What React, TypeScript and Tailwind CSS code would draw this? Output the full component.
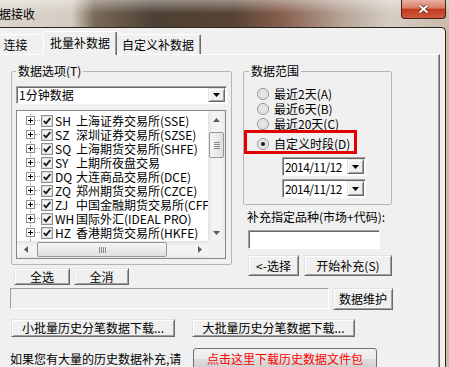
import type { ReactNode } from 'react';

const markets: [string, string][] = [
    ['SH', '上海证券交易所(SSE)'],
    ['SZ', '深圳证券交易所(SZSE)'],
    ['SQ', '上海期货交易所(SHFE)'],
    ['SY', '上期所夜盘交易'],
    ['DQ', '大连商品交易所(DCE)'],
    ['ZQ', '郑州期货交易所(CZCE)'],
    ['ZJ', '中国金融期货交易所(CFFEX)'],
    ['WH', '国际外汇(IDEAL PRO)'],
    ['HZ', '香港期货交易所(HKFE)'],
    ['XG', '香港联合交易所(HKEX)'],
];

function TreeLines() {
    return (
        <svg width="15" height="14" className="shrink-0">
            <path d="M4.5 0V2 M4.5 11V14" stroke="#a0a0a0" strokeDasharray="1 1" />
            <rect x="0.5" y="2.5" width="8" height="8" fill="#fff" stroke="#919191" />
            <path d="M2 6.5H7 M4.5 4V9" stroke="#000" />
            <path d="M9 6.5H15" stroke="#a0a0a0" strokeDasharray="1 1" />
        </svg>
    );
}

function CheckBox() {
    return (
        <svg width="12" height="12" className="shrink-0">
            <rect x="0.5" y="0.5" width="11" height="11" fill="#fff" stroke="#8e8f8f" />
            <rect x="1.5" y="1.5" width="9" height="9" fill="#f6f6f6" stroke="#dcdcdc" />
            <path d="M2.8 5.8L5 8.3L9.3 3.2" fill="none" stroke="#1c1c1c" strokeWidth="1.9" />
        </svg>
    );
}

function Radio({ checked }: { checked?: boolean }) {
    return (
        <svg width="12" height="12" className="shrink-0">
            <circle cx="6" cy="6" r="5.5" fill="#f4f4f4" stroke="#8e8f8f" />
            <circle cx="6" cy="6" r="3.8" fill="#e6e6e6" stroke="#d0d0d0" strokeWidth="0.6" />
            {checked && <circle cx="6" cy="6" r="2" fill="#1b1b1b" />}
        </svg>
    );
}

function DownTri({ color = '#000' }: { color?: string }) {
    return (
        <svg width="7" height="4">
            <path d="M0 0h7L3.5 4z" fill={color} />
        </svg>
    );
}

function Btn({ children, className }: { children: ReactNode; className: string }) {
    return (
        <button
            type="button"
            className={`flex items-center justify-center bg-[#f0f0f0] border border-t-[#e3e3e3] border-l-[#e3e3e3] border-r-[#696969] border-b-[#696969] shadow-[inset_1px_1px_0_#fff,inset_-1px_-1px_0_#a0a0a0] text-[12px] leading-[14px] ${className}`}
        >
            {children}
        </button>
    );
}

function DropButton({ className }: { className: string }) {
    return (
        <div
            className={`shrink-0 flex items-center justify-center bg-[#f0f0f0] border border-t-[#e3e3e3] border-l-[#e3e3e3] border-r-[#696969] border-b-[#696969] shadow-[inset_1px_1px_0_#fff,inset_-1px_-1px_0_#a0a0a0] ${className}`}
        >
            <DownTri />
        </div>
    );
}

function DateBox() {
    return (
        <div className="ml-[38px] w-[84px] h-[19px] flex items-center bg-white border border-t-[#a0a0a0] border-l-[#a0a0a0] border-r-white border-b-white shadow-[inset_1px_1px_0_#696969]">
            <span className="pl-[2px] flex-1 text-[12px] leading-[14px] tracking-[-0.6px] whitespace-nowrap overflow-hidden">2014/11/12</span>
            <DropButton className="w-[17px] h-[15px] mr-[1px]" />
        </div>
    );
}

export default function App() {
    return (
        <div className="w-[449px] h-[367px] overflow-hidden text-black font-['Noto_Sans_CJK_SC',sans-serif] bg-[linear-gradient(90deg,#ddd6ce_0%,#d4cbc1_16%,#7a6a5a_21%,#4e4034_34%,#574334_52%,#88604e_63%,#b5a395_76%,#d6cdc3_87%,#c9baa9_100%)]">
            {/* title bar */}
            <div className="h-[27px] flex items-start bg-[linear-gradient(180deg,rgba(255,255,255,0.4),rgba(255,255,255,0)_50%)]">
                <span className="self-center ml-[-1px] text-[12px] leading-[14px]">据接收</span>
                <div className="ml-auto mr-[3px] w-[45px] h-[19px] flex items-center justify-center rounded-b-[4px] border border-t-0 border-[#4a1f16] bg-[linear-gradient(180deg,#eab0a2_0%,#d87c66_45%,#c2391f_52%,#cf5a3d_100%)]">
                    <svg width="11" height="10">
                        <path d="M1.5 1.5L9.5 8.5M9.5 1.5L1.5 8.5" stroke="#5a2418" strokeWidth="3.4" />
                        <path d="M1.5 1.5L9.5 8.5M9.5 1.5L1.5 8.5" stroke="#fff" strokeWidth="2" />
                    </svg>
                </div>
            </div>

            {/* client area */}
            <div className="w-[446px] h-[340px] bg-[#f0f0f0] border-t border-r border-[#2b241f] rounded-tr-[5px] overflow-hidden">
                {/* tabs */}
                <div className="flex items-end h-[26px]">
                    <div className="ml-[-15px] w-[60px] h-[20px] flex items-center justify-center border-t border-l border-white rounded-t-[2px] shadow-[inset_-1px_0_0_#a0a0a0] text-[12px] leading-[14px]">
                        连接
                    </div>
                    <div className="relative z-10 mx-[-2px] mb-[-1px] w-[74px] h-[24px] flex items-center justify-center bg-[#f0f0f0] border-t border-l border-white border-r border-r-[#696969] rounded-t-[2px] shadow-[inset_-1px_0_0_#a0a0a0] text-[12px] leading-[14px] pb-[2px]">
                        批量补数据
                    </div>
                    <div className="w-[86px] h-[20px] flex items-center justify-center border-t border-l border-white border-r border-r-[#696969] rounded-t-[2px] shadow-[inset_-1px_0_0_#a0a0a0] text-[12px] leading-[14px]">
                        自定义补数据
                    </div>
                </div>

                {/* tab panel */}
                <div className="w-[440px] h-[320px] border-t border-t-white border-r border-r-[#696969] shadow-[inset_-1px_0_0_#a0a0a0]">
                    <div className="flex items-start mt-[9px]">
                        {/* left column */}
                        <div className="ml-[11px] w-[221px]">
                            <fieldset className="border border-[#b5b5b5] rounded-[2px] pb-[5px]">
                                <legend className="ml-[4px] px-[2px] text-[12px] leading-[14px]">数据选项(T)</legend>
                                <div className="mt-[8px] ml-[4px] w-[211px] h-[18px] flex items-center bg-white border border-t-[#a0a0a0] border-l-[#a0a0a0] border-r-white border-b-white shadow-[inset_1px_1px_0_#696969]">
                                    <span className="pl-[2px] flex-1 text-[12px] leading-[14px]">1分钟数据</span>
                                    <DropButton className="w-[17px] h-[14px] mr-[1px]" />
                                </div>
                                <div className="mt-[6px] ml-[4px] w-[210px] h-[149px] flex flex-col bg-white border border-[#828790]">
                                    <div className="flex h-[130px]">
                                        <div className="flex-1 overflow-hidden pt-[3px] text-[12px] leading-[14px]">
                                            {markets.map(([code, name]) => (
                                                <div key={code} className="flex items-center h-[14px] pl-[9px] whitespace-nowrap">
                                                    <TreeLines />
                                                    <CheckBox />
                                                    <span className="ml-[2px] shrink-0 w-[21px]">{code}</span>
                                                    <span className="shrink-0">{name}</span>
                                                </div>
                                            ))}
                                        </div>
                                        {/* vertical scrollbar */}
                                        <div className="shrink-0 w-[17px] flex flex-col bg-[linear-gradient(90deg,#e3e3e3,#f3f3f3_25%,#f3f3f3_75%,#e8e8e8)]">
                                            <div className="h-[17px] flex items-center justify-center">
                                                <svg width="7" height="4">
                                                    <path d="M0 4h7L3.5 0z" fill="#5b5b5b" />
                                                </svg>
                                            </div>
                                            <div className="flex-1">
                                                <div className="mt-[4px] mx-[1px] h-[26px] rounded-[2px] border border-[#979797] bg-[linear-gradient(90deg,#f5f5f5,#e0e0e0)] flex flex-col items-center justify-center gap-[1px]">
                                                    <div className="w-[6px] h-px bg-[#8a8a8a]" />
                                                    <div className="w-[6px] h-px bg-[#8a8a8a]" />
                                                    <div className="w-[6px] h-px bg-[#8a8a8a]" />
                                                    <div className="w-[6px] h-px bg-[#8a8a8a]" />
                                                </div>
                                            </div>
                                            <div className="h-[17px] flex items-center justify-center">
                                                <DownTri color="#5b5b5b" />
                                            </div>
                                        </div>
                                    </div>
                                    {/* horizontal scrollbar */}
                                    <div className="flex h-[17px]">
                                        <div className="flex-1 flex bg-[linear-gradient(180deg,#e3e3e3,#f3f3f3_25%,#f3f3f3_75%,#e8e8e8)]">
                                            <div className="w-[17px] flex items-center justify-center">
                                                <svg width="4" height="7">
                                                    <path d="M4 0v7L0 3.5z" fill="#5b5b5b" />
                                                </svg>
                                            </div>
                                            <div className="flex-1 flex items-center">
                                                <div className="ml-[3px] w-[130px] h-[15px] rounded-[2px] border border-[#979797] bg-[linear-gradient(180deg,#f5f5f5,#e0e0e0)] flex items-center justify-center gap-[1px]">
                                                    <div className="w-px h-[6px] bg-[#8a8a8a]" />
                                                    <div className="w-px h-[6px] bg-[#8a8a8a]" />
                                                    <div className="w-px h-[6px] bg-[#8a8a8a]" />
                                                    <div className="w-px h-[6px] bg-[#8a8a8a]" />
                                                </div>
                                            </div>
                                            <div className="w-[17px] flex items-center justify-center">
                                                <svg width="4" height="7">
                                                    <path d="M0 0v7L4 3.5z" fill="#5b5b5b" />
                                                </svg>
                                            </div>
                                        </div>
                                        <div className="w-[17px] bg-[#f0f0f0]" />
                                    </div>
                                </div>
                            </fieldset>
                            <div className="flex gap-[4px] mt-[3px] ml-[3px]">
                                <Btn className="w-[56px] h-[17px]">全选</Btn>
                                <Btn className="w-[55px] h-[17px]">全消</Btn>
                            </div>
                        </div>

                        {/* right column */}
                        <div className="ml-[11px] w-[149px]">
                            <fieldset className="border border-[#b5b5b5] rounded-[2px] pb-[6px]">
                                <legend className="ml-[5px] px-[2px] text-[12px] leading-[14px]">数据范围</legend>
                                <div className="relative mt-[8px] ml-[13px] text-[12px] leading-[14px]">
                                    <div className="flex items-center h-[15px]">
                                        <Radio />
                                        <span className="ml-[5px]">最近2天(A)</span>
                                    </div>
                                    <div className="flex items-center h-[15px]">
                                        <Radio />
                                        <span className="ml-[5px]">最近6天(B)</span>
                                    </div>
                                    <div className="flex items-center h-[16px]">
                                        <Radio />
                                        <span className="ml-[5px]">最近20天(C)</span>
                                    </div>
                                    <div className="flex items-center h-[14px] mt-[5px]">
                                        <Radio checked />
                                        <span className="ml-[5px]">自定义时段(D)</span>
                                    </div>
                                    <div className="absolute left-[-13px] top-[44px] w-[113px] h-[24px] border-[3px] border-[#e40000]" />
                                </div>
                                <div className="mt-[6px]">
                                    <DateBox />
                                </div>
                                <div className="mt-[3px]">
                                    <DateBox />
                                </div>
                            </fieldset>
                            <div className="mt-[5px] ml-[4px] text-[12px] leading-[14px] whitespace-nowrap">补充指定品种(市场+代码):</div>
                            <div className="mt-[6px] ml-[5px] w-[132px] h-[19px] bg-white border border-t-[#a0a0a0] border-l-[#a0a0a0] border-r-white border-b-white shadow-[inset_1px_1px_0_#696969]" />
                            <div className="flex gap-[5px] mt-[6px] ml-[5px]">
                                <Btn className="w-[51px] h-[21px]">&lt;-选择</Btn>
                                <Btn className="w-[88px] h-[21px]">开始补充(S)</Btn>
                            </div>
                        </div>
                    </div>

                    <div className="flex items-start mt-[3px] ml-[10px]">
                        <div className="w-[319px] h-[21px] bg-[#f0f0f0] border border-t-[#a0a0a0] border-l-[#a0a0a0] border-r-white border-b-white" />
                        <Btn className="ml-[4px] w-[60px] h-[22px]">数据维护</Btn>
                    </div>

                    <div className="flex items-start mt-[9px] ml-[11px]">
                        <Btn className="w-[164px] h-[18px]">小批量历史分笔数据下载...</Btn>
                        <Btn className="ml-[17px] w-[163px] h-[18px]">大批量历史分笔数据下载...</Btn>
                    </div>

                    <div className="flex items-center mt-[11px] ml-[10px]">
                        <span className="w-[173px] text-[12px] leading-[14px] whitespace-nowrap">如果您有大量的历史数据补充,请</span>
                        <button
                            type="button"
                            className="ml-[10px] w-[184px] h-[22px] rounded-[3px] border border-[#707070] bg-[linear-gradient(180deg,#f2f2f2,#ebebeb_50%,#dddddd_51%,#cfcfcf)] text-[12px] leading-[14px] text-[#ff0000]"
                        >
                            点击这里下载历史数据文件包
                        </button>
                    </div>
                </div>
            </div>
        </div>
    );
}
